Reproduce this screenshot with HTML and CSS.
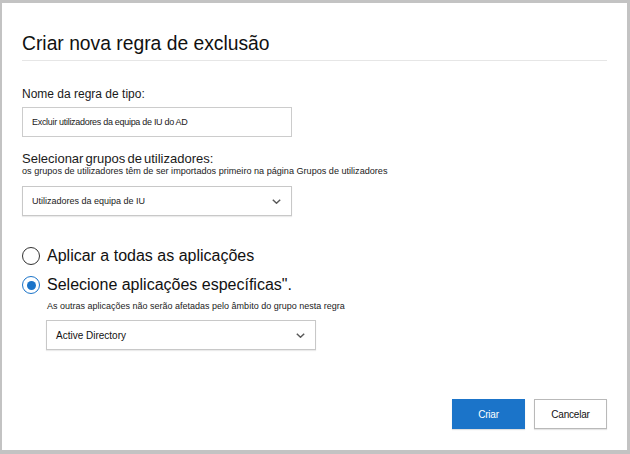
FILE: index.html
```html
<!DOCTYPE html>
<html lang="pt">
<head>
<meta charset="utf-8">
<title>Criar nova regra de exclusão</title>
<link rel="stylesheet" href="styles.css">
</head>
<body>
<div class="frame">
  <div class="dialog">
    <h1 class="title">Criar nova regra de exclusão</h1>

    <div class="field-label label-name">Nome da regra de tipo:</div>
    <div class="textbox"><span class="textbox-value">Excluir utilizadores da equipa de IU do AD</span></div>

    <div class="field-label label-groups">Selecionar grupos de utilizadores:</div>
    <div class="hint hint-groups">os grupos de utilizadores têm de ser importados primeiro na página Grupos de utilizadores</div>
    <div class="select select-groups">
      <span class="select-value">Utilizadores da equipa de IU</span>
      <svg class="chevron" width="9" height="5" viewBox="0 0 9 5"><polyline points="0.8,0.8 4.5,4.2 8.2,0.8" fill="none" stroke="#5a5a5a" stroke-width="1.5"/></svg>
    </div>

    <div class="radio-row radio-all">
      <span class="radio"></span>
      <span class="radio-label">Aplicar a todas as aplicações</span>
    </div>
    <div class="radio-row radio-specific">
      <span class="radio radio-checked"><span class="radio-dot"></span></span>
      <span class="radio-label">Selecione aplicações específicas".</span>
    </div>
    <div class="hint hint-indent">As outras aplicações não serão afetadas pelo âmbito do grupo nesta regra</div>
    <div class="select select-apps">
      <span class="select-value select-value-strong">Active Directory</span>
      <svg class="chevron" width="9" height="5" viewBox="0 0 9 5"><polyline points="0.8,0.8 4.5,4.2 8.2,0.8" fill="none" stroke="#5a5a5a" stroke-width="1.5"/></svg>
    </div>

    <div class="actions">
      <button class="btn btn-primary">Criar</button>
      <button class="btn btn-secondary">Cancelar</button>
    </div>
  </div>
</div>
</body>
</html>
```

FILE: styles.css
```css
html, body {
  margin: 0;
  padding: 0;
  background: #c3c3c3;
}

.frame {
  width: 630px;
  height: 454px;
  box-sizing: border-box;
  padding: 3px 3px 4px 2px;
  background: #c3c3c3;
  font-family: "Liberation Sans", Arial, sans-serif;
  color: #1a1a1a;
}

.dialog {
  height: 100%;
  box-sizing: border-box;
  background: #ffffff;
  padding: 30px 20px 21px 20px;
  display: flex;
  flex-direction: column;
}

.title {
  margin: 0;
  font-size: 19.3px;
  line-height: 22px;
  font-weight: normal;
  color: #111;
  padding-bottom: 5px;
  border-bottom: 1px solid #e6e6e6;
}

.field-label {
  font-size: 12px;
  line-height: 16px;
  color: #1a1a1a;
}

.label-name {
  margin-top: 25px;
}

.label-groups {
  margin-top: 15px;
  font-size: 13px;
  line-height: 13px;
  word-spacing: -1.5px;
}

.hint {
  font-size: 9px;
  line-height: 10px;
  color: #222;
  margin-top: 0;
}

.hint-groups {
  font-size: 9.1px;
  margin-top: 1px;
}

.hint-indent {
  margin-left: 25px;
  margin-top: 6px;
}

.textbox {
  margin-top: 5px;
  width: 270px;
  height: 30px;
  box-sizing: border-box;
  border: 1px solid #cccccc;
  display: flex;
  align-items: center;
  padding-left: 9px;
}

.textbox-value {
  font-size: 9px;
  letter-spacing: -0.3px;
  color: #222;
}

.select {
  width: 270px;
  height: 30px;
  box-sizing: border-box;
  border: 1px solid #c8c8c8;
  box-shadow: 0 1px 1px rgba(0, 0, 0, 0.08);
  display: flex;
  align-items: center;
  justify-content: space-between;
  padding: 0 9px 0 9px;
}

.select-groups {
  margin-top: 10px;
}

.select-apps {
  margin-top: 9px;
  margin-left: 24px;
}

.select-value {
  font-size: 9px;
  color: #222;
}

.select-value-strong {
  font-size: 10px;
  color: #111;
}

.chevron {
  display: block;
  margin-right: 1px;
}

.radio-row {
  display: flex;
  align-items: center;
  height: 20px;
  gap: 7px;
}

.radio-all {
  margin-top: 30px;
}

.radio-specific {
  margin-top: 9px;
}

.radio {
  width: 18px;
  height: 18px;
  box-sizing: border-box;
  border: 1.5px solid #333;
  border-radius: 50%;
  display: flex;
  align-items: center;
  justify-content: center;
  flex: none;
}

.radio-checked {
  border-color: #1b74c9;
}

.radio-dot {
  width: 9px;
  height: 9px;
  border-radius: 50%;
  background: #1b74c9;
}

.radio-label {
  font-size: 16px;
  line-height: 20px;
  color: #111;
}

.actions {
  margin-top: auto;
  display: flex;
  justify-content: flex-end;
  gap: 9px;
}

.btn {
  width: 73px;
  height: 30px;
  box-sizing: border-box;
  font-family: "Liberation Sans", Arial, sans-serif;
  font-size: 10px;
  letter-spacing: -0.2px;
  padding: 0;
  border-radius: 0;
  cursor: pointer;
}

.btn-primary {
  background: #1b74c9;
  border: 1px solid #1b74c9;
  color: #ffffff;
  box-shadow: 0 1px 1px rgba(0, 0, 0, 0.12);
}

.btn-secondary {
  background: #ffffff;
  border: 1px solid #b9b9b9;
  color: #111;
  box-shadow: 0 1px 1px rgba(0, 0, 0, 0.1);
}
```
